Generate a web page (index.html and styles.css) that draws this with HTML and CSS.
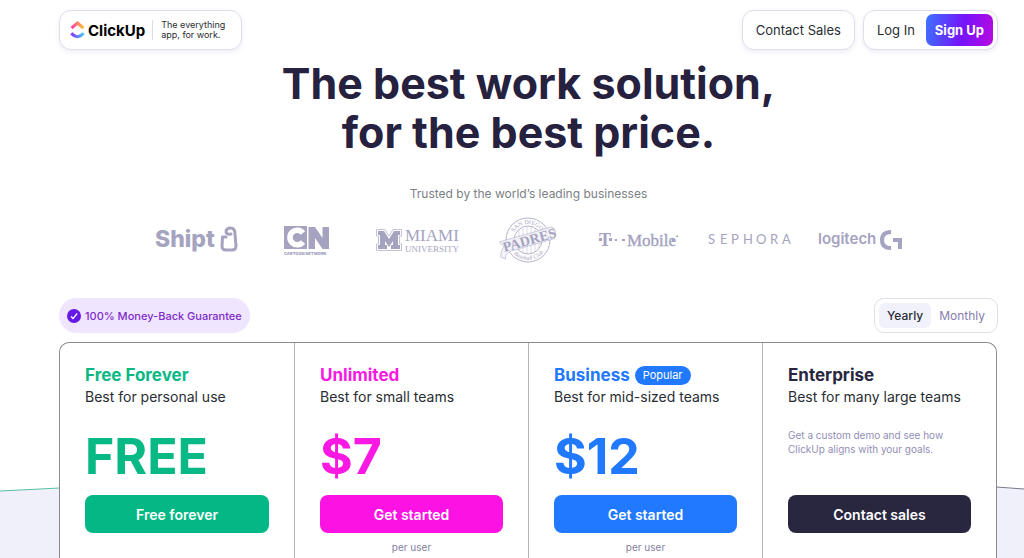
FILE: index.html
```html
<!DOCTYPE html>
<html lang="en">

<head>
    <meta charset="UTF-8">
    <meta name="viewport" content="width=device-width, initial-scale=1.0">
    <title>ClickUp Pricing</title>
    <link rel="stylesheet" href="styles.css">
</head>

<body>
    <!-- curved background behind the plans -->
    <svg class="wave" viewBox="0 0 1024 74" preserveAspectRatio="none" aria-hidden="true">
        <path d="M0 7Q512 -12 1024 5V74H0Z" fill="#f0f0fa" />
        <path d="M0 7L60 4" fill="none" stroke="#55bfa1" />
        <path d="M996 3L1024 5" fill="none" stroke="#77778a" />
    </svg>

    <div class="container">
        <header class="header">
            <a class="brand" href="#">
                <svg width="15" height="18" viewBox="0 0 15 18" aria-hidden="true">
                    <defs>
                        <linearGradient id="roof" x1="0" x2="1">
                            <stop offset="0" stop-color="#ff3dac" />
                            <stop offset="1" stop-color="#ffc02e" />
                        </linearGradient>
                        <linearGradient id="smile" x1="0" x2="1">
                            <stop offset="0" stop-color="#8930fd" />
                            <stop offset="1" stop-color="#49ccf9" />
                        </linearGradient>
                    </defs>
                    <path d="M1.600 7L7.500 2L13.400 7" fill="none" stroke="url(#roof)" stroke-width="3" />
                    <path d="M1.400 12.300Q7.500 19 13.600 12.300" fill="none" stroke="url(#smile)" stroke-width="3" />
                </svg>
                <span class="brand-name">ClickUp</span>
                <span class="brand-tagline">The everything<br>app, for work.</span>
            </a>
            <nav class="nav">
                <a class="nav-box" href="#">Contact Sales</a>
                <div class="nav-box nav-account">
                    <a href="#">Log In</a>
                    <button class="signup">Sign Up</button>
                </div>
            </nav>
        </header>

        <h1>The best work solution,<br>for the best price.</h1>
        <p class="trusted">Trusted by the world’s leading businesses</p>

        <div class="logos">
            <svg width="84" height="48" viewBox="0 0 84 48">
                <text x="0" y="31" class="logo-sans" font-size="23" font-weight="800">Shipt</text>
                <path d="M71 21H67.500L67 30Q67 34 71 34H77Q81 34 81 30L80 18Q80 12 75.500 12Q71 12 71 16Q72 19 76 18" fill="none" stroke="#a5a3c0" stroke-width="3" stroke-linecap="round" stroke-linejoin="round" />
            </svg>
            <svg width="46" height="48" viewBox="0 0 46 48">
                <path d="M0 10H23V33H0Z" fill="#a5a3c0" />
                <path d="M19 17A7.300 7.300 0 1 0 19 26" fill="none" stroke="#fff" stroke-width="5.500" />
                <path d="M24.500 33V11H31L38.500 22V11H45V33H38.500L31 22V33Z" fill="#a5a3c0" />
                <text x="0" y="39" class="logo-sans" font-size="4" font-weight="900">CARTOON NETWORK</text>
            </svg>
            <svg width="84" height="48" viewBox="0 0 84 48">
                <path d="M.500 13.500H9L13 20L17 13.500H25.500V20H23.500V28H25.500V34.500H.500V28H2.500V20H.500Z" fill="none" stroke="#c3c2d6" />
                <path d="M2 15H8L13 23L18 15H24V19H22V29H24V33H15V29H17V25L13 31L9 25V29H11V33H2V29H4V19H2Z" fill="#a5a3c0" />
                <text x="29" y="25" class="logo-serif" font-size="17">MIAMI</text>
                <text x="29" y="36" class="logo-serif" font-size="9">UNIVERSITY</text>
            </svg>
            <svg width="60" height="48" viewBox="0 0 60 48">
                <defs>
                    <path id="ringTop" d="M14 24A16 16 0 0 1 46 24" />
                    <path id="ringBottom" d="M10 24A20 20 0 0 0 50 24" />
                </defs>
                <g fill="none" stroke="#b4b3cb">
                    <circle cx="30" cy="24" r="22" />
                    <circle cx="30" cy="24" r="14" />
                    <path d="M21 14V34M25 12V37M29 11V38M33 11V38M37 13V36M41 17V32" stroke-width=".5" />
                </g>
                <text class="logo-serif" font-size="6"><textPath href="#ringTop" startOffset="8">SAN DIEGO</textPath></text>
                <text class="logo-serif" font-size="6" font-style="italic"><textPath href="#ringBottom" startOffset="15">Baseball Club</textPath></text>
                <g transform="rotate(-16 30 24)">
                    <path d="M2 18H57L59 22L56 30H11Q4 31 3 36L-1 33Q1 26 5 24Z" fill="#f2f2f8" stroke="#b4b3cb" stroke-width=".6" />
                    <text x="4" y="29" class="logo-serif" font-size="14" font-weight="700">PADRES</text>
                </g>
            </svg>
            <svg width="80" height="48" viewBox="0 0 80 48">
                <text x="0" y="30" class="logo-serif" font-size="18" font-weight="700">T</text>
                <path d="M0 22H3V25H0ZM10 22H13V25H10ZM16 23H18V25H16ZM23 23H26V25H23ZM73 23H76V26H73ZM76 21L79 19V21Z" fill="#a5a3c0" />
                <text x="28" y="30" class="logo-serif" font-size="17" stroke="#a5a3c0" stroke-width=".4">Mobile</text>
            </svg>
            <svg width="84" height="48" viewBox="0 0 84 48">
                <text x="0 12 23 35 48 62 74" y="28" class="logo-lato" font-size="13">SEPHORA</text>
            </svg>
            <svg width="84" height="48" viewBox="0 0 84 48">
                <text x="0" y="28" class="logo-sans" font-size="15" font-weight="600">logitech</text>
                <path d="M73 16Q64 16 64 24Q64 32 73 32M75 24H82V33" fill="none" stroke="#a5a3c0" stroke-width="4" />
            </svg>
        </div>

        <div class="toolbar">
            <div class="guarantee">
                <svg width="14" height="14" viewBox="0 0 14 14" aria-hidden="true">
                    <circle cx="7" cy="7" r="7" fill="#6518e6" />
                    <path d="M4 7.500L6 9.500L10.200 4.500" fill="none" stroke="#fff" stroke-width="1.200" />
                </svg>
                100% Money-Back Guarantee
            </div>
            <div class="billing">
                <button class="active">Yearly</button>
                <button>Monthly</button>
            </div>
        </div>

        <main class="plans">
            <section class="plan free">
                <h2>Free Forever</h2>
                <p class="subtitle">Best for personal use</p>
                <div class="price">FREE</div>
                <button class="cta">Free forever</button>
            </section>
            <section class="plan unlimited">
                <h2>Unlimited</h2>
                <p class="subtitle">Best for small teams</p>
                <div class="price">$7</div>
                <button class="cta">Get started</button>
                <p class="per-user">per user</p>
            </section>
            <section class="plan business">
                <h2>Business <span class="popular">Popular</span></h2>
                <p class="subtitle">Best for mid-sized teams</p>
                <div class="price">$12</div>
                <button class="cta">Get started</button>
                <p class="per-user">per user</p>
            </section>
            <section class="plan enterprise">
                <h2>Enterprise</h2>
                <p class="subtitle">Best for many large teams</p>
                <p class="price demo">Get a custom demo and see how<br>ClickUp aligns with your goals.</p>
                <button class="cta">Contact sales</button>
            </section>
        </main>
    </div>
</body>

</html>
```

FILE: styles.css
```css
* {
    box-sizing: border-box;
}

body {
    font-family: 'Inter', sans-serif;
    background-color: #fff;
    color: #292d34;
    margin: 0;
    position: relative;
}

h1,
h2,
p {
    margin: 0;
}

a {
    color: inherit;
    text-decoration: none;
}

button {
    font-family: inherit;
    border: none;
    cursor: pointer;
}

.wave {
    position: absolute;
    left: 0;
    bottom: 0;
    width: 100%;
    height: 74px;
    z-index: -1;
}

.container {
    display: flex;
    flex-direction: column;
    min-height: 100vh;
    padding: 10px 26px 0 59px;
}

.header,
.nav,
.toolbar {
    display: flex;
    justify-content: space-between;
    align-items: center;
}

.brand,
.nav-box {
    display: flex;
    align-items: center;
    height: 40px;
    background: #fff;
    border: 1px solid #dfddec;
    border-radius: 12px;
    box-shadow: 0 2px 5px rgba(90, 80, 160, 0.1);
}

.brand {
    padding: 0 16px 0 10px;
}

.brand-name {
    color: #000;
    font-size: 15px;
    font-weight: 700;
    margin: 0 7px 0 3px;
}

.brand-tagline {
    border-left: 1px solid #dddde5;
    padding-left: 8px;
    font-size: 9px;
    line-height: 10px;
}

.nav {
    gap: 8px;
    font-size: 13px;
}

.nav-box {
    padding: 0 13px;
}

.nav-account {
    gap: 11px;
    padding-right: 4px;
}

.signup {
    height: 32px;
    padding: 0 9px;
    border-radius: 7px;
    background: linear-gradient(100deg, #3c73ff, #7612fa 55%, #b80be0);
    color: #fff;
    font-size: 13px;
    font-weight: 700;
}

h1 {
    margin-top: 9px;
    color: #25213f;
    font-size: 43px;
    font-weight: 700;
    line-height: 49px;
    text-align: center;
}

.trusted {
    margin-top: 28px;
    color: #7c7f86;
    font-size: 12px;
    line-height: 18px;
    text-align: center;
}

.logos {
    display: grid;
    grid-template-columns: repeat(7, 1fr);
    justify-items: center;
    width: 100%;
    max-width: 774px;
    margin: 13px auto 34px;
}

.logos text {
    fill: #a5a3c0;
}

.logo-sans {
    font-family: 'Inter', sans-serif;
}

.logo-serif {
    font-family: 'Liberation Serif', serif;
}

.logo-lato {
    font-family: 'Lato', sans-serif;
}

.guarantee {
    display: flex;
    align-items: center;
    gap: 4px;
    height: 35px;
    padding: 0 8px;
    border-radius: 18px;
    background: #f0e5ff;
    color: #7d2bc9;
    font-size: 11px;
    font-weight: 500;
}

.billing {
    display: flex;
    height: 35px;
    padding: 4px;
    background: #fff;
    border: 1px solid #dfdfe8;
    border-radius: 10px;
}

.billing button {
    padding: 0 8px;
    border-radius: 6px;
    background: none;
    color: #8580ad;
    font-size: 12px;
}

.billing .active {
    background: #f1f1fb;
    color: #292d34;
    font-weight: 500;
}

.plans {
    display: grid;
    grid-template-columns: repeat(4, 1fr);
    flex: 1;
    margin: 9px 1px 0 0;
    background: #fff;
    border: 1px solid #8b8b8f;
    border-bottom: none;
    border-radius: 10px 10px 0 0;
}

.plan {
    padding: 21px 25px 3px;
}

.plan + .plan {
    border-left: 1px solid #b3b3b6;
}

.plan h2 {
    display: flex;
    align-items: center;
    gap: 5px;
    font-size: 17px;
    font-weight: 700;
    line-height: 22px;
}

.popular {
    padding: 0 8px;
    border-radius: 10px;
    background: #2079ff;
    color: #fff;
    font-size: 11px;
    font-weight: 400;
    line-height: 19px;
}

.subtitle {
    font-size: 14px;
    line-height: 22px;
}

.price {
    height: 76px;
    margin-bottom: 11px;
    padding-top: 18px;
    font-size: 50px;
    font-weight: 700;
    line-height: 60px;
}

.price.demo {
    padding-top: 20px;
    color: #918eb5;
    font-size: 10px;
    font-weight: 400;
    line-height: 14px;
}

.cta {
    width: 100%;
    height: 38px;
    border-radius: 8px;
    color: #fff;
    font-size: 14px;
    font-weight: 600;
}

.per-user {
    margin-top: 6px;
    color: #85819f;
    font-size: 10px;
    line-height: 16px;
    text-align: center;
}

.free h2,
.free .price {
    color: #08b985;
}

.free .cta {
    background: #03b884;
}

.unlimited h2,
.unlimited .price {
    color: #fa18e3;
}

.unlimited .cta {
    background: #fc12e2;
}

.business h2,
.business .price {
    color: #2079ff;
}

.business .cta {
    background: #2079ff;
}

.enterprise h2 {
    color: #292640;
}

.enterprise .cta {
    background: #292640;
}
```
